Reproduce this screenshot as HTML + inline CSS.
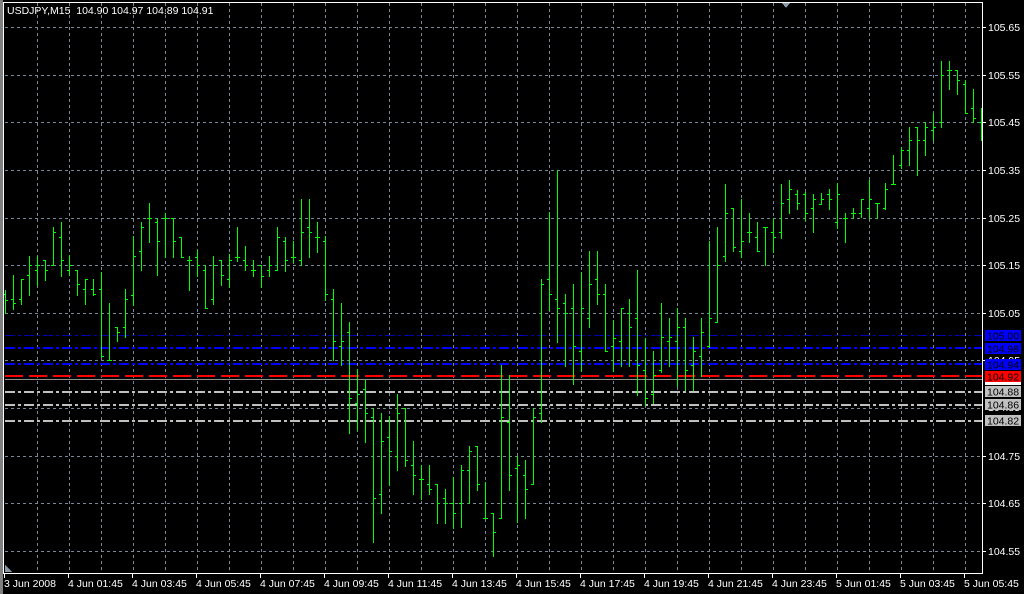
<!DOCTYPE html>
<html><head><meta charset="utf-8"><style>
html,body{margin:0;padding:0;background:#000;width:1024px;height:594px;overflow:hidden}
svg{display:block}
text{font-family:"Liberation Sans",sans-serif;font-size:10.5px;white-space:pre}
</style></head><body>
<svg id="s" width="1024" height="594" xmlns="http://www.w3.org/2000/svg" shape-rendering="crispEdges">
<rect width="1024" height="594" fill="#000"/>
<g id="grid" stroke="#778899" stroke-width="1" stroke-dasharray="3,3"></g>
<g id="lines"></g>
<path id="bars" fill="none" stroke="#00ff00" stroke-width="1"/>
<g id="axis"></g>
<text x="7" y="14" fill="#fff" xml:space="preserve">USDJPY,M15  104.90 104.97 104.89 104.91</text>
</svg>
<script>
const NS="http://www.w3.org/2000/svg";
function el(p,t,a,txt){const e=document.createElementNS(NS,t);for(const k in a)e.setAttribute(k,a[k]);if(txt!==undefined)e.textContent=txt;p.appendChild(e);return e;}
const grid=document.getElementById('grid');
for(let x=37;x<982;x+=32)el(grid,'line',{x1:x+.5,y1:3,x2:x+.5,y2:573});
const hy=[27,75,122,170,218,265,313,360,408,456,503,551];
hy.forEach(y=>el(grid,'line',{x1:5,y1:y+.5,x2:982,y2:y+.5}));
const L=document.getElementById('lines');
el(L,'line',{x1:5,y1:335.5,x2:982,y2:335.5,stroke:'#0000b0','stroke-width':1,'stroke-dasharray':'10,3,3,3'});
el(L,'line',{x1:5,y1:348,x2:982,y2:348,stroke:'#0000ff','stroke-width':2,'stroke-dasharray':'10,3,3,3'});
el(L,'line',{x1:5,y1:364,x2:982,y2:364,stroke:'#0000ff','stroke-width':2,'stroke-dasharray':'10,3,3,3'});
el(L,'line',{x1:5,y1:376,x2:982,y2:376,stroke:'#ff0000','stroke-width':2,'stroke-dasharray':'18,6'});
el(L,'line',{x1:5,y1:379.5,x2:982,y2:379.5,stroke:'#909090','stroke-width':1});
[392,405,421].forEach(y=>el(L,'line',{x1:5,y1:y,x2:982,y2:y,stroke:'#c0c0c0','stroke-width':2,'stroke-dasharray':'10,3,3,3'}));
const B=[
[5,290,313,294,300],[13,275,309,299,303],[21,279,304,299,279],[29,256,295,275,265],[37,256,285,270,265],[45,260,280,260,270],[53,227,265,265,232],[61,222,276,237,260],[69,255,275,270,265],[77,270,295,270,284],[85,279,304,289,279],[93,279,295,289,294],[101,272,357,289,356],[109,303,360,360,360],[117,327,341,327,332],[125,289,337,327,299],[133,236,305,295,256],[141,222,270,251,227],[149,203,242,218,218],[157,218,275,222,241],[165,213,257,218,218],
[173,218,257,218,241],[181,237,257,237,257],[189,256,290,260,260],[197,250,276,257,265],[205,265,308,270,308],[213,256,304,299,265],[221,260,285,260,275],[229,254,287,279,260],[237,227,261,257,257],[245,246,270,260,265],[253,260,276,270,270],[261,265,287,265,276],[269,256,276,270,265],[277,227,270,270,237],[285,237,271,241,260],[293,241,262,257,257],[301,199,265,260,232],[309,199,257,227,232],[317,222,252,237,237],[325,236,300,241,294],[333,289,360,299,341],[341,303,365,346,341],[349,322,433,332,398],[357,369,430,403,394],[365,380,442,389,413],[373,408,542,417,498],[381,413,513,494,441],[389,416,485,437,451],[397,394,470,456,413],[405,408,466,408,460],[413,441,494,465,475],[421,465,499,479,479],[429,465,494,484,489],
[437,484,523,484,503],[445,489,523,498,503],[453,477,528,503,513],[461,465,527,503,470],[469,446,503,470,451],[477,446,490,446,484],[485,482,518,518,518],[493,513,556,513,532],[501,365,518,518,417],[509,375,490,422,475],[517,456,522,468,465],[525,460,518,475,489],[533,408,484,484,417],[541,279,422,413,284],[549,212,310,279,294],[557,170,342,299,308],[565,294,366,303,313],[573,284,384,308,346],[581,272,371,351,308],[589,251,327,318,284],[597,251,304,279,294],[605,284,351,294,351],[613,320,371,346,338],[621,308,366,341,308],[629,299,366,313,327],[637,270,395,318,365],[645,338,405,370,398],[653,351,403,394,375],[661,303,372,370,337],[669,318,366,341,337],[677,308,386,341,327],[685,318,390,327,370],
[693,337,390,365,351],[701,318,376,356,332],[709,241,347,346,318],[717,227,322,322,265],[725,184,261,256,213],[733,208,251,208,247],[741,199,257,251,241],[749,213,242,232,232],[757,222,251,237,251],[765,227,265,227,227],[773,218,252,232,237],[781,184,238,232,203],[789,180,213,199,189],[797,190,209,194,203],[805,192,220,194,213],[813,194,232,208,199],[821,193,204,204,199],[829,189,209,194,199],[837,183,228,222,194],[845,213,242,218,218],[853,208,218,213,213],[861,199,217,213,199],[869,180,218,208,199],[877,203,218,203,203],[885,183,209,208,189],[893,155,184,184,184],[901,147,168,165,150],[909,127,165,150,140],[917,127,175,127,140],[925,122,155,140,127],[933,113,140,130,127],[941,61,127,122,75],[949,61,89,70,70],[957,70,94,70,80],[965,80,113,84,113],[973,89,122,108,118],[981,108,140,122,122]];
let d='';
B.forEach(([x,h,l,o,c])=>{d+=`M${x+.5},${h}V${l+1}M${x-2},${o+.5}h2M${x+1},${c+.5}h2`;});
document.getElementById('bars').setAttribute('d',d);
const A=document.getElementById('axis');
el(A,'rect',{x:0,y:0,width:3,height:594,fill:'#808080'});
el(A,'line',{x1:3.5,y1:2,x2:3.5,y2:574,stroke:'#fff'});
el(A,'line',{x1:3,y1:2.5,x2:983,y2:2.5,stroke:'#fff'});
el(A,'line',{x1:982.5,y1:2,x2:982.5,y2:574,stroke:'#fff'});
el(A,'line',{x1:3,y1:573.5,x2:983,y2:573.5,stroke:'#fff'});
el(A,'path',{d:'M782,3h8l-4,5z',fill:'#8899aa'});
el(A,'path',{d:'M5,565v7h7z',fill:'#8899aa'});
const P=[[27,'105.65'],[75,'105.55'],[122,'105.45'],[170,'105.35'],[218,'105.25'],[265,'105.15'],[313,'105.05'],[360,'104.95'],[456,'104.75'],[503,'104.65'],[551,'104.55']];
P.forEach(([y,t])=>{el(A,'line',{x1:982,y1:y+.5,x2:986,y2:y+.5,stroke:'#fff'});el(A,'text',{x:988,y:y+4,fill:'#fff'},t);});
el(A,'text',{x:988,y:411,fill:'#fff'},'104.85');
const lab=[[330,'#0000ff','105.00'],[343,'#0000ff','104.98'],[359,'#0000ff','104.94'],[371,'#ff0000','104.92'],[386,'#c0c0c0','104.88'],[399,'#c0c0c0','104.86'],[415,'#c0c0c0','104.82']];
el(A,'rect',{x:985,y:381,width:36,height:4,fill:'#fff'});
lab.forEach(([y,c,t])=>{el(A,'rect',{x:985,y:y,width:36,height:11,fill:c});el(A,'text',{x:987,y:y+9.5,fill:'#000'},t);});
const D=[[4,'3 Jun 2008'],[68,'4 Jun 01:45'],[132,'4 Jun 03:45'],[196,'4 Jun 05:45'],[260,'4 Jun 07:45'],[324,'4 Jun 09:45'],[388,'4 Jun 11:45'],[452,'4 Jun 13:45'],[516,'4 Jun 15:45'],[580,'4 Jun 17:45'],[644,'4 Jun 19:45'],[708,'4 Jun 21:45'],[772,'4 Jun 23:45'],[836,'5 Jun 01:45'],[900,'5 Jun 03:45'],[964,'5 Jun 05:45']];
D.forEach(([x,t])=>{el(A,'line',{x1:x+.5,y1:573,x2:x+.5,y2:578,stroke:'#fff'});el(A,'text',{x:x,y:587,fill:'#fff'},t);});
</script>
</body></html>
